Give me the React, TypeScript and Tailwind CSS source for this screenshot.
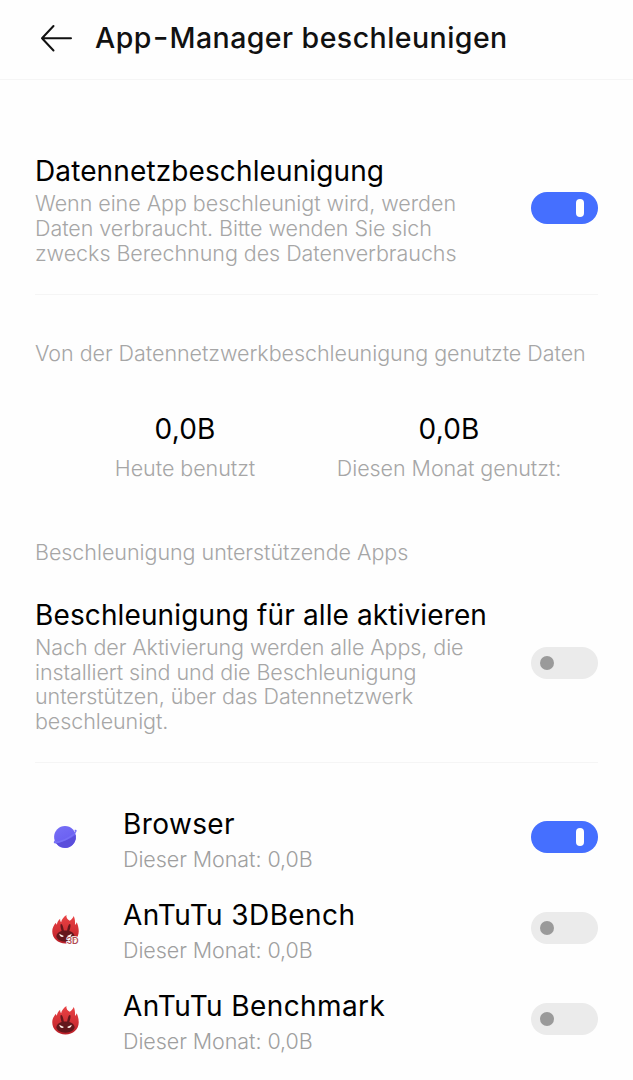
import type { ReactNode } from 'react';

function Toggle({ on }: { on: boolean }) {
  return on ? (
    <button role="switch" aria-checked="true" className="flex h-[32px] w-[67px] shrink-0 items-center justify-end rounded-full bg-[#456fff] pr-[14px]">
      <span className="h-[18px] w-[8px] rounded-full bg-white" />
    </button>
  ) : (
    <button role="switch" aria-checked="false" className="flex h-[32px] w-[67px] shrink-0 items-center rounded-full bg-[#ebebeb] pl-[9px]">
      <span className="h-[14px] w-[14px] rounded-full bg-[#9a9a9a]" />
    </button>
  );
}

function BrowserIcon() {
  return (
    <svg width="30" height="30" viewBox="0 0 30 30">
      <defs>
        <linearGradient id="planet" x1="0" y1="0" x2="0.5" y2="1">
          <stop offset="0" stopColor="#7770f6" />
          <stop offset="1" stopColor="#675bf0" />
        </linearGradient>
      </defs>
      <circle cx="15" cy="14" r="10.9" fill="url(#planet)" />
      <path d="M6 20.100C12 19.500 20.500 15.600 25.700 12A10.900 10.900 0 0 1 6 20.100Z" fill="#5a4edb" />
      <path d="M4.800 17.200C2.800 19.600 3.800 20.900 7 20.300C13.500 19 21.500 14.700 25.400 10.200C27.600 7.500 26.800 6.200 24.400 6.900L24.900 8.200C25.900 8.600 24.600 10 22.500 11.500C17.500 15 10.500 18.100 6.300 18.500C4.900 18.600 4.700 18.100 4.800 17.200Z" fill="#7770f6" />
    </svg>
  );
}

function AntutuIcon({ badge = false }: { badge?: boolean }) {
  return (
    <svg width="29" height="33" viewBox="0 0 30 34">
      <defs>
        <linearGradient id="flame" x1="0" y1="0" x2="0" y2="1">
          <stop offset="0" stopColor="#ea4345" />
          <stop offset="0.55" stopColor="#d23035" />
          <stop offset="1" stopColor="#b91f28" />
        </linearGradient>
      </defs>
      <path d="M16 2C13 4 10.800 7 10.500 9.500C9.600 8.500 9.300 7.300 9.500 6C7.500 7.500 6.300 10 6.100 12C5.500 11.500 5.100 10.800 5 10C2.600 13 1.300 15.600 1.300 18.800C1.300 26.200 7.200 31.500 15 31.500S28.700 26.200 28.700 18.800C28.700 15.600 27.800 12.200 26.600 9.500C26.300 10.800 25.700 11.700 24.800 12.400C25.100 8.600 24.700 5.500 23.500 3C22.700 5.200 21 6.800 19.300 8C16.700 6.600 15.500 4.200 16 2Z" fill="url(#flame)" />
      <path d="M5.500 24C6 21 8.200 19.200 11 18.600C10 15.500 9.300 12.400 10.200 11.400C11.600 10.600 12.700 14.500 13.300 18H16.700C17.300 14.500 18.400 10.600 19.800 11.400C20.700 12.400 20 15.500 19 18.600C21.800 19.200 24 21 24.500 24C23.800 27.600 20.200 29.600 15 29.600S6.200 27.600 5.500 24Z" fill="#64171c" />
      <path d="M8.500 21.300L13.300 23.600C12 25.700 9.200 24.700 8.500 21.300ZM21.500 21.300L16.700 23.600C18 25.700 20.800 24.700 21.500 21.300Z" fill="#fff0e8" />
      {badge && (
        <text x="16" y="31.500" fontFamily="Inter, sans-serif" fontSize="9.500" fontWeight="600" fill="#b04a50" stroke="#fff" strokeWidth="1.500" paintOrder="stroke" textLength="12.500">
          3D
        </text>
      )}
    </svg>
  );
}

function Title({ children }: { children: ReactNode }) {
  return <h2 className="whitespace-nowrap text-[28px] leading-[34px] font-normal tracking-[0.120px] text-black">{children}</h2>;
}

function AppRow({ icon, name, on = false }: { icon: ReactNode; name: string; on?: boolean }) {
  return (
    <li className="flex h-[91.400px] items-start">
      <div className="flex h-[62px] w-[60px] items-center justify-center">{icon}</div>
      <div className="ml-[28px] flex-1">
        <h3 className="whitespace-nowrap text-[28px] leading-[34px] font-normal tracking-[0.400px] text-black">{name}</h3>
        <p className="mt-[6px] text-[21.500px] leading-[25px] font-light tracking-[-0.070px] text-[#9f9f9f]">Dieser Monat: 0,0B</p>
      </div>
      <div className="mt-[14px] flex">
        <Toggle on={on} />
      </div>
    </li>
  );
}

export default function App() {
  return (
    <main className="h-[1080px] w-[633px] overflow-hidden bg-[#fefefe] font-['Inter',sans-serif]">
      <header className="flex h-[80px] items-start border-b border-[#f5f5f5] pl-[40px]">
        <svg className="mt-[24px]" width="34" height="30" viewBox="0 0 34 30" fill="none" stroke="#111" strokeWidth="2" strokeLinecap="round" strokeLinejoin="round">
          <path d="M31 14.300H2M13.500 2L2 14.300L13.500 26.500" />
        </svg>
        <h1 className="mt-[21px] ml-[21px] whitespace-nowrap text-[28.500px] leading-[34px] font-medium tracking-[0.450px] text-[#111]">
          App<span className="mx-[2px] inline-block origin-center -translate-y-px scale-x-120">-</span>Manager beschleunigen
        </h1>
      </header>

      <div className="pr-[35px] pl-[35px]">
        <section className="flex h-[215px] justify-between border-b border-[#f5f5f5] pt-[74px]">
          <div>
            <Title>Datennetzbeschleunigung</Title>
            <p className="mt-[3.400px] whitespace-nowrap text-[21.500px] leading-[24.700px] font-light tracking-[-0.050px] text-[#a6a6a6]">
              Wenn eine App beschleunigt wird, werden<br />
              Daten verbraucht. Bitte wenden Sie sich<br />
              zwecks Berechnung des Datenverbrauchs
            </p>
          </div>
          <div className="mt-[38px] flex items-start">
            <Toggle on />
          </div>
        </section>

        <section className="pt-[46px] text-[21.500px] leading-[25px] font-light tracking-[-0.050px] text-[#a6a6a6]">
          <p className="whitespace-nowrap">Von der Datennetzwerkbeschleunigung genutzte Daten</p>
          <div className="mt-[46px] ml-[18px] flex text-center">
            <div className="w-[264px]">
              <Title>0,0B</Title>
              <p className="mt-[10px]">Heute benutzt</p>
            </div>
            <div className="w-[264px]">
              <Title>0,0B</Title>
              <p className="mt-[10px]">Diesen Monat genutzt:</p>
            </div>
          </div>
          <p className="mt-[59px]">Beschleunigung unterstützende Apps</p>
        </section>

        <section className="flex h-[198px] justify-between border-b border-[#f5f5f5] pt-[33px]">
          <div>
            <Title>Beschleunigung für alle aktivieren</Title>
            <p className="mt-[3px] whitespace-nowrap text-[21.500px] leading-[24.600px] font-light tracking-[-0.090px] text-[#a6a6a6]">
              Nach der Aktivierung werden alle Apps, die<br />
              installiert sind und die Beschleunigung<br />
              unterstützen, über das Datennetzwerk<br />
              beschleunigt.
            </p>
          </div>
          <div className="mt-[49px] flex items-start">
            <Toggle on={false} />
          </div>
        </section>

        <ul className="pt-[43.700px]">
          <AppRow icon={<BrowserIcon />} name="Browser" on />
          <AppRow icon={<AntutuIcon badge />} name="AnTuTu 3DBench" />
          <AppRow icon={<AntutuIcon />} name="AnTuTu Benchmark" />
        </ul>
      </div>
    </main>
  );
}
